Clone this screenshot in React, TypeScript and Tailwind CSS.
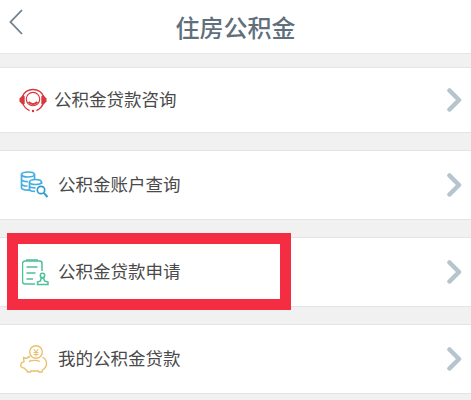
const cjk = { fontFamily: '"Noto Sans CJK SC", "Liberation Sans", sans-serif' };

function HeadsetIcon() {
  return (
    <svg width="28" height="25" viewBox="0 0 29 26" fill="none" stroke="#d9363e">
      <path d="M3.5 9C5 4.500 9.500 1.500 14.500 1.500S24 4.500 25.500 9M25 16c-1 3.500-3.500 6-7 7.500" strokeWidth="1.6" />
      <path d="M4 16c1 3.500 3.500 6 7 7.500" strokeWidth="1.2" />
      <circle cx="14.5" cy="11.5" r="7" strokeWidth="1.2" />
      <path d="M3.500 8 .8 11 .8 14 3.500 17 5.500 16.500V8.500Z" fill="#d9363e" strokeWidth="0.6" />
      <path d="M25.500 8 28.200 11 28.200 14 25.500 17 23.500 16.500V8.500Z" fill="#d9363e" strokeWidth="0.6" />
      <path d="M10 14.500c2.500 3 6.500 3 9 0" strokeWidth="2" />
      <circle cx="14.500" cy="24" r="1.300" fill="#d9363e" stroke="none" />
    </svg>
  );
}

function CoinsIcon() {
  return (
    <svg width="29" height="28" viewBox="0 0 29 28" fill="none" stroke="#45aee0" strokeWidth="1.7">
      <ellipse cx="8" cy="3.5" rx="6.5" ry="2.5" />
      <path d="M1.5 3.5v13c0 1.6 2.8 2.6 6.5 2.6h2M1.5 8c0 1.5 2.8 2.6 6.5 2.6M1.5 12.4c0 1.5 2.8 2.6 6 2.6M14.5 3.5V8" />
      <ellipse cx="15.5" cy="11" rx="6" ry="2.5" fill="#fff" />
      <path d="M9.5 11v7c0 1.4 2.7 2.4 5.5 2.4M9.5 14.500c0 1.400 2.700 2.400 6 2.400M21.500 11v2" />
      <circle cx="21" cy="19" r="3.700" stroke="#2f9fc9" fill="#fff" />
      <path d="M23.800 21.800 27.500 26" stroke="#2f9fc9" strokeWidth="2" />
    </svg>
  );
}

function FormIcon() {
  return (
    <svg width="27" height="27" viewBox="0 0 27 27" fill="none" stroke="#4cc198" strokeWidth="1.5">
      <path d="M13 25H3a2.500 2.500 0 0 1-2.500-2.500V4.500A2.500 2.500 0 0 1 3 2h14.500a2.500 2.500 0 0 1 2.500 2.500V12" />
      <path d="M4 1h12" />
      <path d="M4.500 8h11M4.500 14h9M4.500 20h6.500" strokeWidth="1.6" />
      <circle cx="20.500" cy="16.500" r="2.200" />
      <path d="M15.500 25.500h10.500v-2.500l-3.500-1-.8-3h-2.400l-.8 3-3 1z" />
    </svg>
  );
}

function PiggyIcon() {
  return (
    <svg width="29" height="28" viewBox="0 0 29 28" fill="none" stroke="#eac06e" strokeWidth="1.4">
      <circle cx="16" cy="7" r="6.3" />
      <path d="M13.7 4l2.3 3 2.3-3M13.5 7.5h5M13.5 9.5h5M16 7v4.500" strokeWidth="1.1" />
      <path d="M10 11.500c-1.500.4-2.600 1-3.500 1.900L3.500 12.500l.5 4C2.500 17 1 18 .8 19.500v2c.6 1 2 1.500 3.700 1.800.8 1 1.500 1.800 2.500 2.400l.4 1.300h3.100l.4-1h7.600l.4 1h3.100l.5-2c2.600-1.600 4-3.800 4-6.500 0-2.700-1.500-5-4-6.500" />
      <path d="M9 16.500c3-1.500 8-1.600 11 0" />
    </svg>
  );
}

function Chevron() {
  return (
    <svg width="15" height="24" viewBox="0 0 15 24" fill="none" stroke="#b5c4cd" strokeWidth="4.5" strokeLinecap="round" strokeLinejoin="round" className="shrink-0">
      <path d="M2.5 2.5 12 12 2.5 21.5" />
    </svg>
  );
}

function Row({ icon, label, height, gap, left }: { icon: React.ReactNode; label: string; height: string; gap: string; left: string }) {
  return (
    <div className={`flex items-center justify-between bg-white border-y border-[#e4e4e4] pr-[9px] ${height} ${left}`}>
      <div className={`flex items-center ${gap}`}>
        {icon}
        <span className="mb-[2px] text-[17.5px] leading-none text-[#4a4a4a]" style={cjk}>{label}</span>
      </div>
      <Chevron />
    </div>
  );
}

export default function App() {
  return (
    <div className="relative w-[471px] h-[400px] overflow-hidden bg-[#f1f1f1]">
      <header className="relative flex items-center justify-center h-[54px] bg-white border-b border-[#e6e6e6]">
        <svg width="16" height="28" viewBox="0 0 16 28" fill="none" stroke="#6e7f8b" strokeWidth="1.8" className="absolute left-[8px] top-[8px]">
          <path d="M14 2 2.5 14 14 26" />
        </svg>
        <h1 className="text-[24px] font-medium leading-none text-[#5f6f7c]" style={cjk}>住房公积金</h1>
      </header>
      <div className="flex flex-col gap-[17px] pt-[13px]">
        <Row icon={<HeadsetIcon />} label="公积金贷款咨询" height="h-[66px]" gap="gap-[7px]" left="pl-[19px]" />
        <Row icon={<CoinsIcon />} label="公积金账户查询" height="h-[70px]" gap="gap-[9px]" left="pl-[20px]" />
        <Row icon={<FormIcon />} label="公积金贷款申请" height="h-[70px]" gap="gap-[9px]" left="pl-[22px]" />
        <Row icon={<PiggyIcon />} label="我的公积金贷款" height="h-[70px]" gap="gap-[9px]" left="pl-[20px]" />
      </div>
      <div className="absolute left-[7px] top-[233px] w-[284px] h-[77px] border-[11px] border-[#f52d42]" />
    </div>
  );
}
